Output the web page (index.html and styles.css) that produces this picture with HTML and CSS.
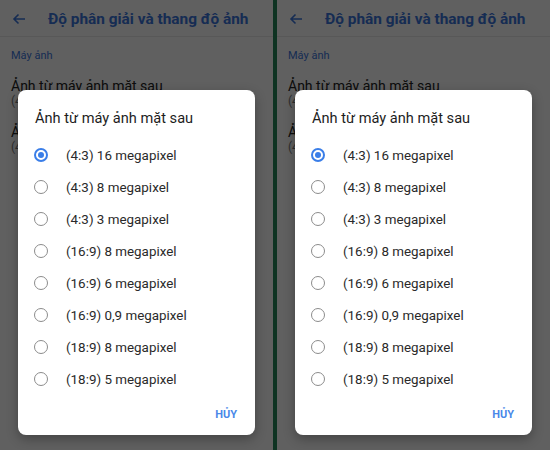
FILE: index.html
```html
<!DOCTYPE html>
<html lang="vi">
<head>
    <meta charset="UTF-8">
    <meta name="viewport" content="width=device-width, initial-scale=1.0">
    <title>Độ phân giải và thang độ ảnh</title>
    <link rel="stylesheet" href="styles.css">
</head>
<body>
    <div class="screen">
        <div class="header">
            <svg class="back" width="14" height="12" viewBox="0 0 14 12">
                <path d="M13 6H2M6.5 1.5L2 6l4.5 4.5" fill="none" stroke="#3a73d6" stroke-width="1.6"/>
            </svg>
            <h1>Độ phân giải và thang độ ảnh</h1>
        </div>
        <div class="section">Máy ảnh</div>
        <div class="pref">
            <div class="pref-title">Ảnh từ máy ảnh mặt sau</div>
            <div class="pref-sub">(4:3) 16 MP</div>
        </div>
        <div class="pref">
            <div class="pref-title">Ảnh</div>
            <div class="pref-sub">(4:3)</div>
        </div>

        <div class="scrim"></div>

        <div class="dialog">
            <div class="dialog-title">Ảnh từ máy ảnh mặt sau</div>
            <ul class="options">
                <li><span class="radio checked"></span>(4:3) 16 megapixel</li>
                <li><span class="radio"></span>(4:3) 8 megapixel</li>
                <li><span class="radio"></span>(4:3) 3 megapixel</li>
                <li><span class="radio"></span>(16:9) 8 megapixel</li>
                <li><span class="radio"></span>(16:9) 6 megapixel</li>
                <li><span class="radio"></span>(16:9) 0,9 megapixel</li>
                <li><span class="radio"></span>(18:9) 8 megapixel</li>
                <li><span class="radio"></span>(18:9) 5 megapixel</li>
            </ul>
            <div class="actions">
                <span class="btn">HỦY</span>
            </div>
        </div>
    </div>

    <div class="divider"></div>

    <div class="screen">
        <div class="header">
            <svg class="back" width="14" height="12" viewBox="0 0 14 12">
                <path d="M13 6H2M6.5 1.5L2 6l4.5 4.5" fill="none" stroke="#3a73d6" stroke-width="1.6"/>
            </svg>
            <h1>Độ phân giải và thang độ ảnh</h1>
        </div>
        <div class="section">Máy ảnh</div>
        <div class="pref">
            <div class="pref-title">Ảnh từ máy ảnh mặt sau</div>
            <div class="pref-sub">(4:3) 16 MP</div>
        </div>
        <div class="pref">
            <div class="pref-title">Ảnh</div>
            <div class="pref-sub">(4:3)</div>
        </div>

        <div class="scrim"></div>

        <div class="dialog">
            <div class="dialog-title">Ảnh từ máy ảnh mặt sau</div>
            <ul class="options">
                <li><span class="radio checked"></span>(4:3) 16 megapixel</li>
                <li><span class="radio"></span>(4:3) 8 megapixel</li>
                <li><span class="radio"></span>(4:3) 3 megapixel</li>
                <li><span class="radio"></span>(16:9) 8 megapixel</li>
                <li><span class="radio"></span>(16:9) 6 megapixel</li>
                <li><span class="radio"></span>(16:9) 0,9 megapixel</li>
                <li><span class="radio"></span>(18:9) 8 megapixel</li>
                <li><span class="radio"></span>(18:9) 5 megapixel</li>
            </ul>
            <div class="actions">
                <span class="btn">HỦY</span>
            </div>
        </div>
    </div>
</body>
</html>
```

FILE: styles.css
```css
* {
    box-sizing: border-box;
}

body {
    margin: 0;
    width: 550px;
    height: 450px;
    display: flex;
    overflow: hidden;
    font-family: Roboto, "Noto Sans", sans-serif;
    background: #fff;
}

.screen {
    position: relative;
    width: 273px;
    height: 450px;
    background: #f7f7f7;
    overflow: hidden;
}

.divider {
    width: 4px;
    background: #0e3322;
}

.header {
    height: 37px;
    display: flex;
    align-items: center;
    padding: 2px 0 0 12px;
    border-bottom: 1px solid #e2e2e2;
}

.back {
    flex: none;
}

.header h1 {
    margin: 0 0 0 22px;
    font-size: 15.4px;
    font-weight: 700;
    color: #3a73d6;
    white-space: nowrap;
}

.section {
    padding: 12px 11px 0;
    font-size: 11px;
    color: #3a73d6;
}

.pref {
    padding: 16px 11px 0;
}

.pref-title {
    font-size: 14px;
    color: #222;
    line-height: 17px;
}

.pref-sub {
    font-size: 12px;
    color: #777;
    line-height: 13px;
}

.scrim {
    position: absolute;
    inset: 0;
    background: rgba(0, 0, 0, 0.61);
}

/* popup with the list of resolutions */
.dialog {
    position: absolute;
    left: 18px;
    top: 90px;
    width: 237px;
    height: 345px;
    background: #fff;
    border-radius: 8px;
    box-shadow: 0 4px 12px rgba(0, 0, 0, 0.3);
    padding: 16px 0 0;
}

.dialog-title {
    padding-left: 17px;
    font-size: 14.6px;
    line-height: 24px;
    color: #1d1d1d;
}

.options {
    list-style: none;
    margin: 9px 0 0;
    padding: 0;
}

.options li {
    height: 32px;
    display: flex;
    align-items: center;
    padding-left: 16px;
    font-size: 13.4px;
    color: #2a2a2a;
}

.radio {
    width: 14px;
    height: 14px;
    border: 1.5px solid #8c8c8c;
    border-radius: 50%;
    margin-right: 18px;
    flex: none;
    display: flex;
    align-items: center;
    justify-content: center;
}

.radio.checked {
    border: 2px solid #3a7ee8;
}

.radio.checked::after {
    content: "";
    width: 6px;
    height: 6px;
    border-radius: 50%;
    background: #3a7ee8;
}

.actions {
    display: flex;
    justify-content: flex-end;
    padding: 5px 18px 0 0;
}

.btn {
    line-height: 30px;
    font-size: 11px;
    font-weight: 700;
    color: #4a88e8;
}
```
